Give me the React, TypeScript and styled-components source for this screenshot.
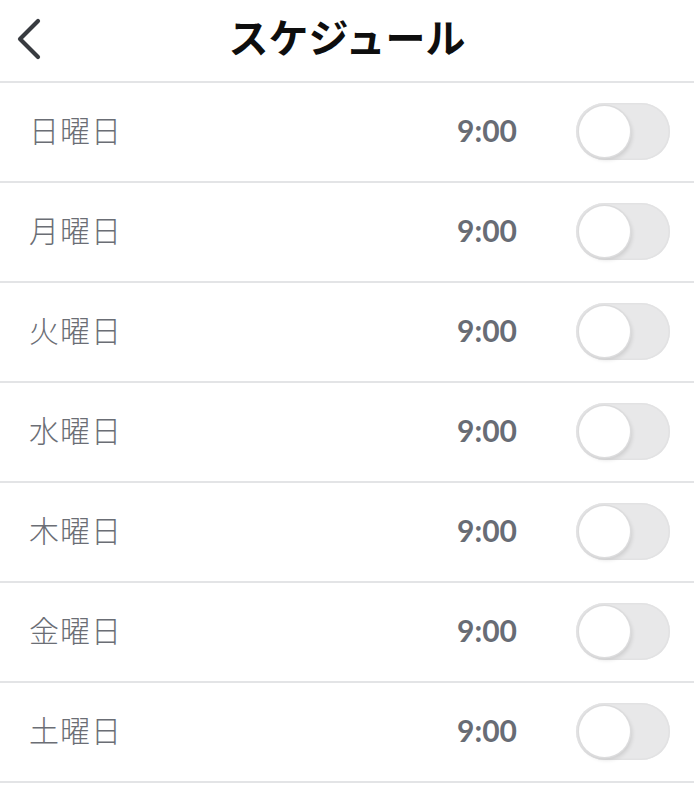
import React, { useState } from "react";
import styled, { createGlobalStyle } from "styled-components";

const GlobalStyle = createGlobalStyle`
  html, body { margin: 0; padding: 0; background: #ffffff; }
  body { font-family: "Noto Sans CJK JP", "Noto Sans", sans-serif; }
  * { box-sizing: border-box; }
`;

const Page = styled.div`
  width: 694px;
  min-height: 800px;
  background: #ffffff;
  display: flex;
  flex-direction: column;
`;

const Header = styled.header`
  height: 83px;
  border-bottom: 2px solid #e3e4e6;
  display: grid;
  grid-template-columns: 80px 1fr 80px;
  align-items: center;
`;

const BackButton = styled.button`
  border: none;
  background: none;
  padding: 0 0 0 14px;
  margin-top: -4px;
  display: flex;
  align-items: center;
  cursor: pointer;
`;

const Title = styled.h1`
  margin: -9px 0 0;
  text-align: center;
  font-family: "Noto Sans CJK JP", "Noto Sans", sans-serif;
  font-weight: 700;
  font-size: 40px;
  letter-spacing: 0px;
  color: #0e0e0e;
`;

const Row = styled.div`
  height: 100px;
  border-bottom: 2px solid #e3e4e6;
  display: flex;
  align-items: center;
  padding: 0 24px 0 29px;
`;

const DayLabel = styled.span`
  flex: 1;
  font-family: "Noto Sans CJK JP", sans-serif;
  font-weight: 300;
  font-size: 30px;
  letter-spacing: 1px;
  color: #6b6e75;
  margin-top: -7px;
`;

const Time = styled.span`
  font-family: Lato, "Liberation Sans", sans-serif;
  font-weight: 700;
  font-size: 30px;
  color: #686c74;
  margin-right: 59px;
  margin-top: -5px;
`;

const Track = styled.button<{ $on: boolean }>`
  width: 94px;
  height: 57px;
  border-radius: 29px;
  border: none;
  padding: 3px;
  margin-top: -2px;
  background: ${(p) => (p.$on ? "#4cd964" : "#e8e8e9")};
  box-shadow: inset 0 0 0 1.5px ${(p) => (p.$on ? "#4cd964" : "#e2e2e3")};
  display: flex;
  justify-content: ${(p) => (p.$on ? "flex-end" : "flex-start")};
  align-items: center;
  cursor: pointer;
`;

const Knob = styled.span`
  width: 51px;
  height: 51px;
  border-radius: 50%;
  background: #ffffff;
  box-shadow: 0 0 0 1.5px #dcdcdd, 2px 3px 4px rgba(0, 0, 0, 0.12);
`;

const days = ["日曜日", "月曜日", "火曜日", "水曜日", "木曜日", "金曜日", "土曜日"];

export default function App() {
  const [on, setOn] = useState<boolean[]>(days.map(() => false));
  return (
    <Page>
      <GlobalStyle />
      <Header>
        <BackButton aria-label="戻る">
          <svg width="30" height="44" viewBox="0 0 30 44" fill="none">
            <path
              d="M24 4 L6 22 L24 40"
              stroke="#383b40"
              strokeWidth="4.2"
              strokeLinecap="round"
              strokeLinejoin="round"
            />
          </svg>
        </BackButton>
        <Title>スケジュール</Title>
        <span />
      </Header>
      {days.map((d, i) => (
        <Row key={d}>
          <DayLabel>{d}</DayLabel>
          <Time>9:00</Time>
          <Track
            $on={on[i]}
            onClick={() => setOn((s) => s.map((v, j) => (j === i ? !v : v)))}
          >
            <Knob />
          </Track>
        </Row>
      ))}
    </Page>
  );
}
